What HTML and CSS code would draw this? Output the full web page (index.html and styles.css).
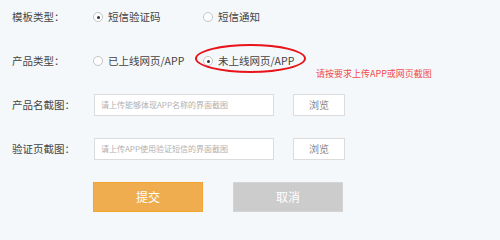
FILE: index.html
```html
<!DOCTYPE html>
<html lang="zh-CN">
<head>
<meta charset="utf-8">
<title>模板设置</title>
<link rel="stylesheet" href="styles.css">
</head>
<body>
<form class="form">
  <div class="row">
    <div class="label">模板类型<span class="colon">：</span></div>
    <div class="options">
      <label class="opt"><span class="radio checked"></span><span>短信验证码</span></label>
      <label class="opt"><span class="radio"></span><span>短信通知</span></label>
    </div>
  </div>
  <div class="row">
    <div class="label">产品类型<span class="colon">：</span></div>
    <div class="options">
      <label class="opt"><span class="radio"></span><span>已上线网页/APP</span></label>
      <label class="opt"><span class="radio checked"></span><span>未上线网页/APP</span></label>
    </div>
    <span class="circle"></span>
    <span class="note">请按要求上传APP或网页截图</span>
  </div>
  <div class="row">
    <div class="label">产品名截图<span class="colon">：</span></div>
    <div class="upload">
      <div class="input">请上传能够体现APP名称的界面截图</div>
      <div class="browse">浏览</div>
    </div>
  </div>
  <div class="row">
    <div class="label">验证页截图<span class="colon">：</span></div>
    <div class="upload">
      <div class="input">请上传APP使用验证短信的界面截图</div>
      <div class="browse">浏览</div>
    </div>
  </div>
  <div class="actions">
    <div class="btn submit">提交</div>
    <div class="btn cancel">取消</div>
  </div>
</form>
</body>
</html>
```
FILE: styles.css
```css
html, body {
  margin: 0;
  padding: 0;
  background: #f4f8fb;
  width: 500px;
  height: 235px;
  overflow: hidden;
}
body {
  font-family: "Noto Sans CJK SC", "Noto Sans", sans-serif;
  color: #444;
  font-size: 10.5px;
}
.form {
  padding: 6px 0 0 12px;
}
.row {
  position: relative;
  display: flex;
  align-items: center;
  height: 22px;
  margin-bottom: 22px;
}
.label {
  width: 81px;
  flex: none;
  line-height: 22px;
  white-space: nowrap;
}
.colon {
  font-family: "Noto Sans CJK TC", sans-serif;
}
.options {
  display: flex;
}
.opt {
  width: 110px;
  display: flex;
  align-items: center;
  line-height: 22px;
}
.radio {
  width: 8px;
  height: 8px;
  border: 1px solid #c4c4c4;
  border-radius: 50%;
  background: #fff;
  margin-right: 5px;
  position: relative;
  flex: none;
}
.radio.checked::after {
  content: "";
  position: absolute;
  left: 2.5px;
  top: 2.5px;
  width: 3px;
  height: 3px;
  border-radius: 50%;
  background: #333;
}
.circle {
  position: absolute;
  left: 183px;
  top: -6px;
  width: 107px;
  height: 25px;
  border: 2px solid #e8141b;
  border-radius: 50%;
}
.note {
  position: absolute;
  left: 304px;
  top: 18px;
  font-size: 9px;
  line-height: 12px;
  color: #f24a4c;
  white-space: nowrap;
}
.upload {
  display: flex;
  align-items: center;
  margin-left: 1px;
}
.input {
  width: 172px;
  height: 20px;
  border: 1px solid #dcdcdc;
  background: #fff;
  padding-left: 6px;
  font-size: 8px;
  line-height: 20px;
  color: #b0b0b0;
  white-space: nowrap;
  overflow: hidden;
}
.browse {
  margin-left: 19px;
  width: 50px;
  height: 20px;
  border: 1px solid #dcdcdc;
  background: #fff;
  text-align: center;
  line-height: 20px;
  font-size: 10px;
  color: #888;
}
.actions {
  display: flex;
  gap: 30px;
  padding-left: 81px;
}
.btn {
  width: 108px;
  height: 28px;
  line-height: 28px;
  text-align: center;
  color: #fff;
  font-size: 12px;
}
.submit {
  background: #efad50;
  border: 1px solid #f2a530;
}
.cancel {
  background: #cccccc;
  border: 1px solid #d4d4d4;
}
```
